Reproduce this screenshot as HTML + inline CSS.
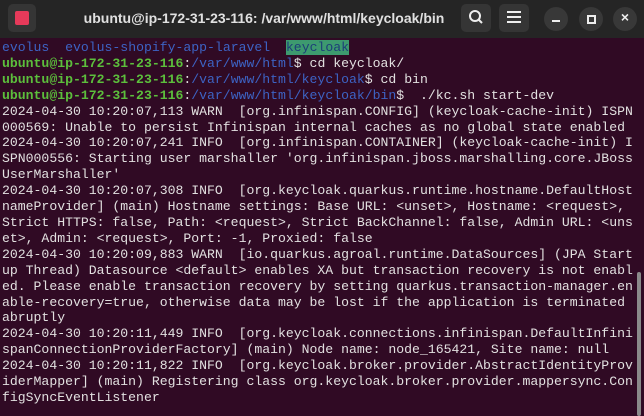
<!DOCTYPE html>
<html><head><style>
html,body{margin:0;padding:0;width:644px;height:416px;overflow:hidden;background:#300a24;}
.tb{position:absolute;left:0;top:0;width:644px;height:38px;background:#252525;}
.title{position:absolute;left:-28px;width:644px;top:10px;text-align:center;font:bold 14px "Liberation Sans",sans-serif;color:#e0e0e0;padding-right:60px;box-sizing:border-box}
.btn{position:absolute;background:#353535;border-radius:5px}
.circ{position:absolute;width:24px;height:24px;border-radius:12px;background:#383838;top:7px}
pre{position:absolute;left:2px;top:40px;margin:0;font:13.15px/15.9px "Liberation Mono",monospace;color:#e2e0e0;white-space:pre}
.g{color:#5cbf3c;font-weight:bold}.b{color:#3d63c4}.hl{background:#3d9a6f;color:#1d3f78}
.sb{position:absolute;left:637px;top:272px;width:4px;height:144px;background:#8a8a8a;border-radius:2px}
</style></head><body>
<div class="tb">
<div class="btn" style="left:8px;top:4px;width:28px;height:28px"></div>
<div style="position:absolute;left:15px;top:11px;width:14px;height:14px;background:#e63a5a;border-radius:2px"></div>
<div class="title">ubuntu@ip-172-31-23-116: /var/www/html/keycloak/bin</div>
<div class="btn" style="left:461px;top:4px;width:30px;height:28px"></div>
<svg style="position:absolute;left:468px;top:9px" width="16" height="17"><circle cx="7" cy="7" r="5" stroke="#eee" stroke-width="2" fill="none"/><line x1="10.5" y1="10.5" x2="14" y2="14" stroke="#eee" stroke-width="2"/></svg>
<div class="btn" style="left:499px;top:4px;width:30px;height:28px"></div>
<div style="position:absolute;left:507px;top:11px;width:14px;height:2px;background:#eee;box-shadow:0 5px 0 #eee,0 10px 0 #eee"></div>
<div class="circ" style="left:544px"></div><div style="position:absolute;left:552px;top:20px;width:8px;height:2px;background:#eee"></div>
<div class="circ" style="left:579px"></div><div style="position:absolute;left:587px;top:15px;width:5px;height:5px;border:2px solid #eee"></div>
<div class="circ" style="left:613px"></div><div style="position:absolute;left:613px;top:9px;width:24px;text-align:center;font:bold 14px 'Liberation Sans',sans-serif;color:#eee">×</div>
</div>
<pre><span class="b">evolus</span>  <span class="b">evolus-shopify-app-laravel</span>  <span class="hl">keycloak</span>
<span class="g">ubuntu@ip-172-31-23-116</span>:<span class="b">/var/www/html</span>$ cd keycloak/
<span class="g">ubuntu@ip-172-31-23-116</span>:<span class="b">/var/www/html/keycloak</span>$ cd bin
<span class="g">ubuntu@ip-172-31-23-116</span>:<span class="b">/var/www/html/keycloak/bin</span>$  ./kc.sh start-dev
2024-04-30 10:20:07,113 WARN  [org.infinispan.CONFIG] (keycloak-cache-init) ISPN
000569: Unable to persist Infinispan internal caches as no global state enabled
2024-04-30 10:20:07,241 INFO  [org.infinispan.CONTAINER] (keycloak-cache-init) I
SPN000556: Starting user marshaller 'org.infinispan.jboss.marshalling.core.JBoss
UserMarshaller'
2024-04-30 10:20:07,308 INFO  [org.keycloak.quarkus.runtime.hostname.DefaultHost
nameProvider] (main) Hostname settings: Base URL: &lt;unset&gt;, Hostname: &lt;request&gt;,
Strict HTTPS: false, Path: &lt;request&gt;, Strict BackChannel: false, Admin URL: &lt;uns
et&gt;, Admin: &lt;request&gt;, Port: -1, Proxied: false
2024-04-30 10:20:09,883 WARN  [io.quarkus.agroal.runtime.DataSources] (JPA Start
up Thread) Datasource &lt;default&gt; enables XA but transaction recovery is not enabl
ed. Please enable transaction recovery by setting quarkus.transaction-manager.en
able-recovery=true, otherwise data may be lost if the application is terminated
abruptly
2024-04-30 10:20:11,449 INFO  [org.keycloak.connections.infinispan.DefaultInfini
spanConnectionProviderFactory] (main) Node name: node_165421, Site name: null
2024-04-30 10:20:11,822 INFO  [org.keycloak.broker.provider.AbstractIdentityProv
iderMapper] (main) Registering class org.keycloak.broker.provider.mappersync.Con
figSyncEventListener</pre>
<div class="sb"></div>
</body></html>
